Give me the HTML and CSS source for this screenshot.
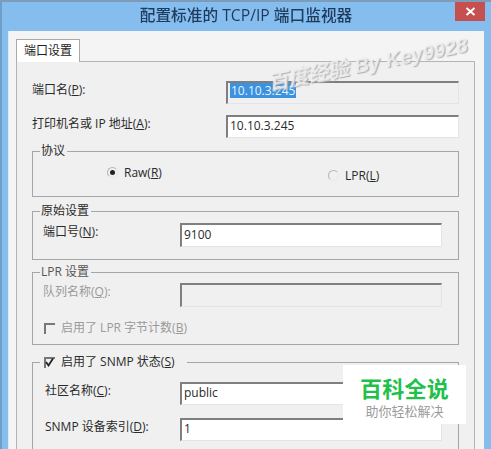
FILE: index.html
```html
<html>
<head>
<title>配置标准的 TCP/IP 端口监视器</title>
<link rel="stylesheet" href="styles.css">
</head>
<body>

<div class="window">
	<div class="titlebar">
		<span class="title">配置标准的 TCP/IP 端口监视器</span>
		<div class="close">
			<svg width="11" height="9" viewBox="0 0 11 9"><path d="M1.5 1 L9.5 8 M9.5 1 L1.5 8" stroke="#fff" stroke-width="2"/></svg>
		</div>
	</div>

	<div class="client">
		<div class="tabs"><div class="tab">端口设置</div></div>

		<div class="panel">
			<div class="toprow">
				<label>端口名(<u>P</u>):</label>
				<div class="field readonly"><span class="sel">10.10.3.245</span></div>
			</div>
			<div class="toprow">
				<label>打印机名或 IP 地址(<u>A</u>):</label>
				<input class="field" type="text" value="10.10.3.245">
			</div>

			<fieldset class="group proto">
				<legend>协议</legend>
				<div class="radios">
					<span class="radio raw"><i class="dot on"></i>Raw(<u>R</u>)</span>
					<span class="radio lpr"><i class="dot"></i>LPR(<u>L</u>)</span>
				</div>
			</fieldset>

			<fieldset class="group rawgroup">
				<legend>原始设置</legend>
				<div class="row first">
					<label>端口号(<u>N</u>):</label>
					<input class="field" type="text" value="9100">
				</div>
			</fieldset>

			<fieldset class="group lprgroup off">
				<legend>LPR 设置</legend>
				<div class="row first">
					<label>队列名称(<u>Q</u>):</label>
					<input class="field disabled" type="text" disabled>
				</div>
				<div class="check">
					<i class="box"></i>启用了 LPR 字节计数(<u>B</u>)
				</div>
			</fieldset>

			<fieldset class="group snmp">
				<legend><i class="box"><svg width="11" height="11" viewBox="0 0 11 11"><path d="M2 5 L4.5 8.5 L9 1.5" fill="none" stroke="#222" stroke-width="1.8"/></svg></i>启用了 SNMP 状态(<u>S</u>)</legend>
				<div class="row first">
					<label>社区名称(<u>C</u>):</label>
					<input class="field" type="text" value="public">
				</div>
				<div class="row">
					<label>SNMP 设备索引(<u>D</u>):</label>
					<input class="field" type="text" value="1">
				</div>
			</fieldset>
		</div>
	</div>
</div>

<!-- stamped over the screenshot -->
<div class="watermark">百度经验 By Key9928</div>
<div class="badge">
	<div class="badge-name">百科全说</div>
	<div class="badge-sub">助你轻松解决</div>
</div>

</body>
</html>
```

FILE: styles.css
```css
html, body {
  margin: 0;
  padding: 0;
  height: 449px;
  overflow: hidden;
  background: #85bdef;
}

body {
  position: relative;
  font-family: "Open Sans", "Noto Sans CJK SC", sans-serif;
  font-size: 12px;
  color: #2a2a2a;
}

.window {
  box-sizing: border-box;
  height: 449px;
  border-top: 2px solid #7d9cba;
  border-left: 2px solid #6f9fc8;
  padding: 0 7px 0 6px;
  filter: blur(0.35px);
}

.titlebar {
  position: relative;
  height: 29px;
  text-align: center;
}

.title {
  font-size: 15.7px;
  line-height: 27px;
  font-weight: 500;
  color: #1f3b5c;
}

.close {
  position: absolute;
  top: 0;
  right: -1px;
  width: 30px;
  height: 19px;
  background: #c5504f;
  display: flex;
  align-items: center;
  justify-content: center;
}

.client {
  box-sizing: border-box;
  background: #f4f4f4;
  border-left: 1px solid #dfe9f3;
  height: 418px;
  padding: 8px 9px 0 7px;
}

.tabs {
  display: flex;
}

.tab {
  background: #fff;
  border: 1px solid #a9a9a9;
  border-bottom: none;
  width: 62px;
  height: 22px;
  line-height: 21px;
  text-align: center;
  color: #222;
  margin-bottom: -1px;
  position: relative;
}

.panel {
  box-sizing: border-box;
  background: #f0f0f0;
  border: 1px solid #b4b4b4;
  border-bottom: none;
  height: 388px;
  padding: 19px 15px 0 15px;
}

label {
  line-height: 18px;
}

.toprow {
  display: flex;
  align-items: flex-start;
  justify-content: space-between;
  height: 23px;
}

.toprow + .toprow {
  margin-top: 11px;
}

.field {
  display: block;
  box-sizing: border-box;
  height: 24px;
  margin: 0;
  padding: 0 0 3px 2px;
  border: 1px solid #e4e4e4;
  border-top: 2px solid #7f7f7f;
  border-left: 2px solid #7f7f7f;
  border-radius: 0;
  background: #fff;
  font-family: inherit;
  font-size: 12px;
  color: #2a2a2a;
  outline: none;
}

.toprow .field {
  width: 233px;
  height: 23px;
}

.row .field {
  width: 262px;
}

.readonly {
  background: #f0f0f0;
  line-height: 15px;
}

.sel {
  display: inline-block;
  background: #3b93e0;
  color: #e8f2fb;
  padding: 0 1px;
}

.disabled {
  background: #f0f0f0;
}

.group {
  margin: 0;
  padding: 0 16px 0 10px;
  border: 1px solid #a6a6a6;
  min-width: 0;
  box-sizing: border-box;
}

.group legend {
  padding: 0 2px 0 1px;
  margin-left: -3px;
  line-height: 18px;
}

.proto {
  height: 55px;
  margin-top: 4px;
}

.radios {
  display: flex;
  padding-left: 64px;
  height: 24px;
  align-items: center;
}

.radio {
  display: flex;
  align-items: center;
}

.raw {
  width: 221px;
}

.lpr {
  position: relative;
  top: 3px;
}

.dot {
  box-sizing: border-box;
  width: 11px;
  height: 11px;
  border: 1px solid #b5b5b5;
  border-right-color: #e8e8e8;
  border-bottom-color: #e8e8e8;
  border-radius: 50%;
  margin-right: 6px;
  position: relative;
}

.dot.on::after {
  content: "";
  position: absolute;
  left: 2px;
  top: 2px;
  width: 5px;
  height: 5px;
  border-radius: 50%;
  background: #222;
}

.rawgroup {
  height: 58px;
  margin-top: 5px;
}

.lprgroup {
  height: 82px;
  margin-top: 3px;
}

.row {
  display: flex;
  align-items: flex-start;
  justify-content: space-between;
  margin-top: 13px;
}

.row.first {
  margin-top: 3px;
}

.lprgroup .row.first {
  margin-top: 2px;
}

.snmp .row.first {
  margin-top: 11px;
}

.snmp .field {
  height: 23px;
}

.off {
  color: #9a9a9a;
}

.off legend {
  color: #555;
}

.check {
  display: flex;
  align-items: center;
  line-height: 18px;
  margin-top: 12px;
}

.box {
  display: inline-block;
  box-sizing: border-box;
  vertical-align: -2px;
  width: 11px;
  height: 11px;
  border-top: 2px solid #777;
  border-left: 2px solid #777;
  margin: 0 6px 0 1px;
}

.group legend .box {
  margin-left: 3px;
}

.box svg {
  display: block;
  margin: -2px 0 0 -2px;
}

.snmp {
  margin-top: 8px;
  height: 96px;
  border-bottom: none;
}

.snmp legend {
  padding-right: 12px;
}

.snmp label {
  padding-left: 2px;
}

.watermark {
  position: absolute;
  left: 266px;
  top: 47px;
  transform: rotate(-11deg);
  font-family: "Liberation Sans", "Noto Sans CJK SC", sans-serif;
  font-style: italic;
  font-weight: bold;
  font-size: 20.5px;
  white-space: nowrap;
  color: rgba(240,240,240,0.9);
  text-shadow: 1px 1px 1px #aaa;
}

.badge {
  position: absolute;
  left: 343px;
  top: 365px;
  width: 123px;
  height: 59px;
  background: #fff;
  text-align: center;
}

.badge-name {
  font-family: "Noto Sans CJK SC", sans-serif;
  font-size: 22px;
  font-weight: 700;
  letter-spacing: 0.3px;
  line-height: 24px;
  margin-top: 10px;
  color: #1fc14b;
}

.badge-sub {
  font-family: "Noto Sans CJK SC", sans-serif;
  font-size: 13px;
  line-height: 16px;
  margin-top: 4px;
  color: #9b9b9b;
}
```
